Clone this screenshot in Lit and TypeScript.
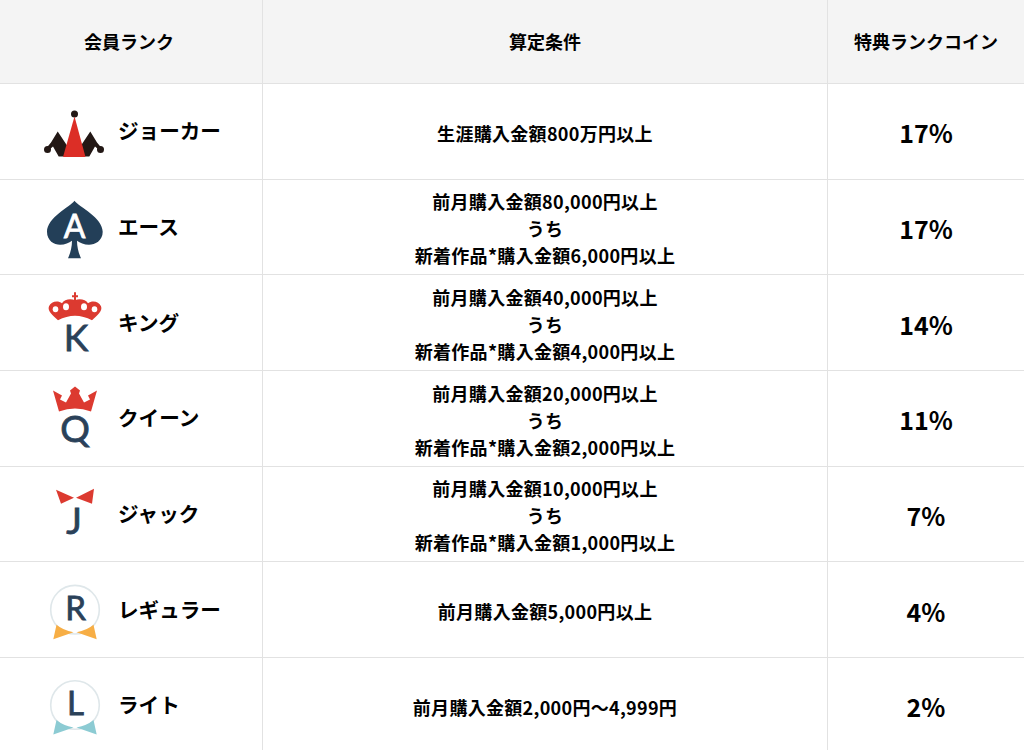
import { LitElement, html, css, svg } from "lit";
import { customElement } from "lit/decorators.js";

const letter = (t: string, x: number, y: number, size: number, fill = "#2a4159") =>
  svg`<text x=${x} y=${y} text-anchor="middle" font-size=${size} font-weight="400" font-family="Lato, sans-serif" fill=${fill} stroke=${fill} stroke-width="0.8">${t}</text>`;

const medal = (cy: number, colour: string, t: string) => svg`
  <circle cx="75" cy=${cy} r="24.300" fill="#fff" stroke="#dfe7ea" stroke-width="1.600"/>
  <path d="M53.300 ${cy + 29.5} L56.500 ${cy + 15} Q63 ${cy + 20.5} 73.500 ${cy + 22.5} Z M96.700 ${cy + 29.5} L93.500 ${cy + 15} Q87 ${cy + 20.5} 76.500 ${cy + 22.5} Z" fill=${colour}/>
  ${letter(t, 75.5, cy + 10, 33)}`;

const rows = [
  { name: "ジョーカー", view: "42 98.5 64 70", cond: ["生涯購入金額800万円以上"], pct: "17%", icon: svg`
    <path d="M46 149 L51 143 L57.700 132 L67 146 L65 157 L58.700 157 L53 147 L47 152 Z M102 149 L97 143 L90.300 132 L81 146 L83 157 L89.300 157 L95 147 L101 152 Z" fill="#231815"/>
    <circle cx="47.500" cy="150" r="3.500" fill="#231815"/><circle cx="100.500" cy="150" r="3.500" fill="#231815"/>
    <circle cx="74.500" cy="114.500" r="3.500" fill="#231815"/>
    <path d="M74.500 117 L85.500 157.500 L63 157.500 Z" fill="#dc2e26"/>` },
  { name: "エース", view: "42 194.2 64 70", cond: ["前月購入金額80,000円以上", "うち", "新着作品*購入金額6,000円以上"], pct: "17%", icon: svg`
    <path d="M74.500 201 C70 207 47 218 47 232 C47 241 54 245 60 245 C65 245 69 243 72 241 C72 248 70 254 68 258.500 L81 258.500 C79 254 77 248 77 241 C80 243 84 245 89 245 C95 245 102.700 241 102.700 232 C102.700 218 79 207 74.500 201 Z" fill="#233f58"/>
    ${letter("A", 74.5, 238, 32, "#fff")}` },
  { name: "キング", view: "42 289.800 64 70", cond: ["前月購入金額40,000円以上", "うち", "新着作品*購入金額4,000円以上"], pct: "14%", icon: svg`
    <path d="M74 292 H76 V295 H78 V297 H76 V301 H74 V297 H72 V295 H74 Z" fill="#dc3a30"/>
    <path d="M58 320 C53 315 47 311 49 306 C51 301 58 300 62 303 C64 299 71 298 75 300 C79 298 86 299 88 303 C92 300 99 301 101 306 C103 311 97 315 92 320 Q75 311 58 320 Z" fill="#dc3a30"/>
    <ellipse cx="55.500" cy="309" rx="2.800" ry="3" fill="#fff"/><ellipse cx="66" cy="306.500" rx="3" ry="3.500" fill="#fff"/>
    <ellipse cx="84" cy="306.500" rx="3" ry="3.500" fill="#fff"/><ellipse cx="94.500" cy="309" rx="2.800" ry="3" fill="#fff"/>
    ${letter("K", 76, 350.5, 37)}` },
  { name: "クイーン", view: "42 385.500 64 70", cond: ["前月購入金額20,000円以上", "うち", "新着作品*購入金額2,000円以上"], pct: "11%", icon: svg`
    <path d="M53 391 L62 396 L60 400 L66 403 L71 394 L70 391 L75 387 L80 391 L79 394 L84 403 L90 400 L88 396 L97 391 L91 412 Q75 406 59 412 Z" fill="#dc3a30"/>
    ${letter("Q", 75, 442, 37)}` },
  { name: "ジャック", view: "42 481.200 64 70", cond: ["前月購入金額10,000円以上", "うち", "新着作品*購入金額1,000円以上"], pct: "7%", icon: svg`
    <path d="M56 490 L74 498 L61 504 Z M94 489 L76 498 L92 504 Z" fill="#dc3a30"/>
    ${letter("J", 74, 534, 37)}` },
  { name: "レギュラー", view: "42 576.800 64 70", cond: ["前月購入金額5,000円以上"], pct: "4%", icon: medal(609.5, "#f7ae45", "R") },
  { name: "ライト", view: "42 672.500 64 70", cond: ["前月購入金額2,000円〜4,999円"], pct: "2%", icon: medal(705.5, "#8ccbd3", "L") },
];

@customElement("app-root")
export class AppRoot extends LitElement {
  static styles = css`
    :host {
      display: block;
      height: 750px;
      overflow: hidden;
      background: #fff;
      color: #000;
      font-family: "Noto Sans CJK JP", sans-serif;
      font-weight: 700;
      font-size: 18px;
    }
    .table {
      display: grid;
      grid-template-columns: 263px 565px 196px;
      grid-auto-rows: 95.67px;
      grid-template-rows: 84px;
    }
    .cell {
      display: flex;
      align-items: center;
      justify-content: center;
      box-sizing: border-box;
      border-right: 1px solid #e2e2e2;
      border-bottom: 1px solid #e2e2e2;
      text-align: center;
      line-height: 27px;
    }
    .cell:nth-child(3n) { border-right: none; }
    .head { background: #f4f4f4; }
    .first { padding-right: 4px; }
    .rank { justify-content: flex-start; padding-left: 42px; gap: 12px; }
    .rank span { font-size: 20.6px; margin-bottom: 1px; }
    .rank svg { flex: none; width: 64px; height: 70px; margin-top: 4px; overflow: visible; }
    .cond { padding-top: 4px; letter-spacing: 0.3px; }
    .pct { padding-top: 3px; font-size: 25px; }
  `;

  render() {
    return html`<div class="table">
      <div class="cell head first">会員ランク</div>
      <div class="cell head">算定条件</div>
      <div class="cell head">特典ランクコイン</div>
      ${rows.map(
        (r) => html`
          <div class="cell rank">
            <svg viewBox=${r.view}>${r.icon}</svg>
            <span>${r.name}</span>
          </div>
          <div class="cell cond"><div>${r.cond.map((l) => html`<div>${l}</div>`)}</div></div>
          <div class="cell pct">${r.pct}</div>
        `
      )}
    </div>`;
  }
}
